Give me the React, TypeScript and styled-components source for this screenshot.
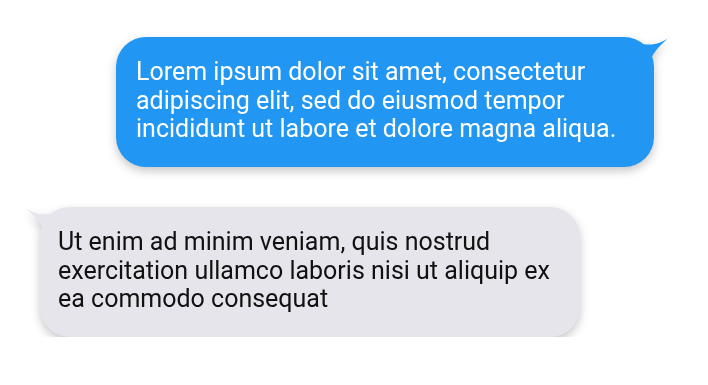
import React from "react";
import styled, { createGlobalStyle } from "styled-components";

const GlobalStyle = createGlobalStyle`
  html, body { margin: 0; padding: 0; background: #ffffff; }
  body { font-family: Roboto, "Noto Sans", sans-serif; }
`;

const Thread = styled.div`
  display: flex;
  flex-direction: column;
  gap: 40px;
  padding: 37px 54px 0 40px;
`;

const Row = styled.div<{ $mine: boolean }>`
  display: flex;
  justify-content: ${(p) => (p.$mine ? "flex-end" : "flex-start")};
`;

const Bubble = styled.div<{ $mine: boolean }>`
  position: relative;
  box-sizing: border-box;
  width: ${(p) => (p.$mine ? "538px" : "540px")};
  height: 130px;
  padding: ${(p) => (p.$mine ? "21px 16px 20px 20px" : "21px 14px 20px 18px")};
  border-radius: 30px;
  background: ${(p) => (p.$mine ? "#2196f3" : "#e6e5eb")};
  color: ${(p) => (p.$mine ? "#ffffff" : "#111111")};
  font-size: 25px;
  line-height: 28.7px;
  filter: drop-shadow(0 4px 5px rgba(0, 0, 0, 0.22));
`;

const Tail = styled.svg<{ $mine: boolean }>`
  position: absolute;
  top: 0;
  width: 36px;
  height: 26px;
  ${(p) =>
    p.$mine
      ? "right: -16px;"
      : "left: -16px; transform: scaleX(-1);"}
`;

const Text = styled.p`
  margin: 0;
  position: relative;
`;

function Message({ mine, text }: { mine: boolean; text: string }) {
  return (
    <Row $mine={mine}>
      <Bubble $mine={mine}>
        <Tail $mine={mine} viewBox="-20 0 36 26" aria-hidden="true">
          <path
            d="M -18 5 C -4 10, 6 7, 14 1 C 6 9, -1 15, -3 23 L -18 23 Z"
            fill={mine ? "#2196f3" : "#e6e5eb"}
          />
        </Tail>
        <Text>{text}</Text>
      </Bubble>
    </Row>
  );
}

export default function App() {
  return (
    <>
      <GlobalStyle />
      <Thread>
        <Message
          mine
          text="Lorem ipsum dolor sit amet, consectetur adipiscing elit, sed do eiusmod tempor incididunt ut labore et dolore magna aliqua."
        />
        <Message
          mine={false}
          text="Ut enim ad minim veniam, quis nostrud exercitation ullamco laboris nisi ut aliquip ex ea commodo consequat"
        />
      </Thread>
    </>
  );
}
